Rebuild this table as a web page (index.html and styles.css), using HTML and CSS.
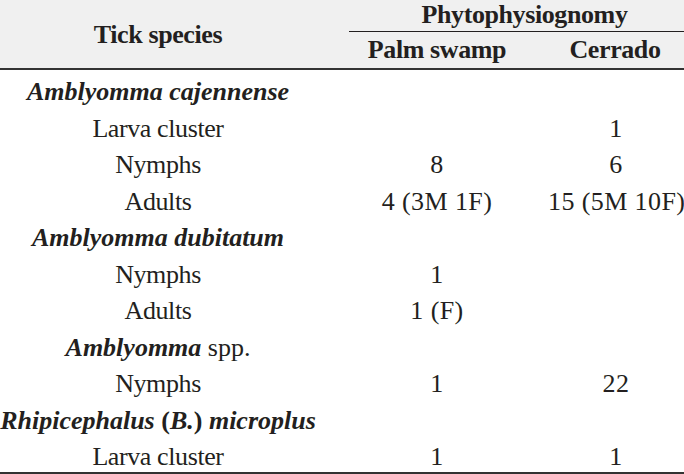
FILE: index.html
```html
<!DOCTYPE html>
<html>
<head>
<meta charset="utf-8">
<link rel="stylesheet" href="styles.css">
</head>
<body>
<div class="table">
  <div class="head">
    <div class="h-species">Tick species</div>
    <div class="h-phyto">Phytophysiognomy</div>
    <div class="h-palm">Palm swamp</div>
    <div class="h-cerrado">Cerrado</div>
  </div>
  <div class="body">
    <div class="row"><div class="c1 sp"><b><i>Amblyomma cajennense</i></b></div><div class="c2"></div><div class="c3"></div></div>
    <div class="row"><div class="c1">Larva cluster</div><div class="c2"></div><div class="c3">1</div></div>
    <div class="row"><div class="c1">Nymphs</div><div class="c2">8</div><div class="c3">6</div></div>
    <div class="row"><div class="c1">Adults</div><div class="c2">4 (3M 1F)</div><div class="c3">15 (5M 10F)</div></div>
    <div class="row"><div class="c1 sp"><b><i>Amblyomma dubitatum</i></b></div><div class="c2"></div><div class="c3"></div></div>
    <div class="row"><div class="c1">Nymphs</div><div class="c2">1</div><div class="c3"></div></div>
    <div class="row"><div class="c1">Adults</div><div class="c2">1 (F)</div><div class="c3"></div></div>
    <div class="row"><div class="c1 sp"><b><i>Amblyomma</i></b> spp.</div><div class="c2"></div><div class="c3"></div></div>
    <div class="row"><div class="c1">Nymphs</div><div class="c2">1</div><div class="c3">22</div></div>
    <div class="row"><div class="c1 sp"><b><i>Rhipicephalus</i> (<i>B.</i>) <i>microplus</i></b></div><div class="c2"></div><div class="c3"></div></div>
    <div class="row"><div class="c1">Larva cluster</div><div class="c2">1</div><div class="c3">1</div></div>
  </div>
</div>
</body>
</html>
```
FILE: styles.css
```css
html, body {
  margin: 0;
  padding: 0;
  background: #ffffff;
}
.table {
  width: 684px;
  font-family: "Liberation Serif", "Times New Roman", serif;
  font-size: 26px;
  letter-spacing: -0.4px;
  color: #231f20;
  border-bottom: 2px solid #333333;
}
.head {
  display: grid;
  grid-template-columns: 316px 230px 138px;
  grid-template-rows: 32px 36px;
  background: #f0f0f0;
  border-bottom: 2px solid #333333;
  font-weight: bold;
}
.h-species {
  grid-column: 1;
  grid-row: 1 / 3;
  display: flex;
  align-items: center;
  justify-content: center;
  padding-top: 2px;
}
.h-phyto {
  grid-column: 2 / 4;
  grid-row: 1;
  margin-left: 33px;
  border-bottom: 1px solid #231f20;
  display: flex;
  align-items: center;
  justify-content: center;
  padding-left: 16px;
  padding-bottom: 1px;
}
.h-palm, .h-cerrado {
  grid-row: 2;
  display: flex;
  align-items: center;
  justify-content: center;
}
.h-palm {
  grid-column: 2;
  padding-left: 12px;
}
.h-cerrado {
  grid-column: 3;
}
.row {
  display: grid;
  grid-template-columns: 316px 230px 138px;
  height: 36.5px;
  align-items: center;
  white-space: nowrap;
}
.c1, .c2, .c3 {
  text-align: center;
  line-height: 36px;
  padding-top: 4px;
}
.sp {
  letter-spacing: 0;
}
.c2, .c3 {
  letter-spacing: 0.4px;
}
.c2 {
  padding-left: 12px;
}
.c3 {
  padding-left: 2px;
}
```
